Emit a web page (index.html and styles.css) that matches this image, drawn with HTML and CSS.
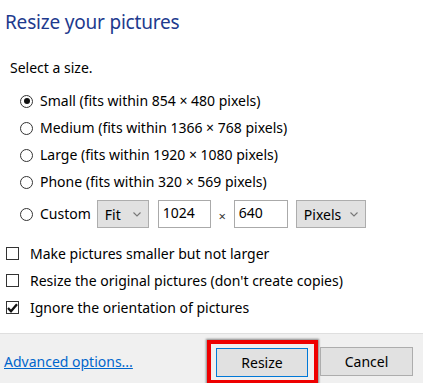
FILE: index.html
```html
<!DOCTYPE html>
<html>
<head>
<meta charset="utf-8">
<link rel="stylesheet" href="styles.css">
</head>
<body>
<div class="dialog">
  <div class="content">
    <h1 class="title">Resize your pictures</h1>
    <div class="prompt">Select a size.</div>
    <div class="radios">
      <div class="radio-row"><span class="radio checked"></span><span class="label">Small (fits within 854 × 480 pixels)</span></div>
      <div class="radio-row"><span class="radio"></span><span class="label">Medium (fits within 1366 × 768 pixels)</span></div>
      <div class="radio-row"><span class="radio"></span><span class="label">Large (fits within 1920 × 1080 pixels)</span></div>
      <div class="radio-row"><span class="radio"></span><span class="label">Phone (fits within 320 × 569 pixels)</span></div>
      <div class="radio-row custom"><span class="radio"></span><span class="label">Custom</span>
        <div class="select fit">Fit<span class="chev"><svg width="8" height="5" viewBox="0 0 8 5"><path d="M0.5 0.5 L4 4 L7.5 0.5" fill="none" stroke="#777" stroke-width="1.1"/></svg></span></div>
        <div class="input w1024">1024</div>
        <span class="times">×</span>
        <div class="input w640">640</div>
        <div class="select pixels">Pixels<span class="chev"><svg width="8" height="5" viewBox="0 0 8 5"><path d="M0.5 0.5 L4 4 L7.5 0.5" fill="none" stroke="#777" stroke-width="1.1"/></svg></span></div>
      </div>
    </div>
    <div class="checks">
      <div class="check-row"><span class="box"></span><span class="label">Make pictures smaller but not larger</span></div>
      <div class="check-row"><span class="box"></span><span class="label">Resize the original pictures (don't create copies)</span></div>
      <div class="check-row"><span class="box"><svg width="11" height="10" viewBox="0 0 11 10"><path d="M1 5 L4 8.2 L10 1.2" fill="none" stroke="#111" stroke-width="2.3"/></svg></span><span class="label">Ignore the orientation of pictures</span></div>
    </div>
  </div>
  <div class="footer">
    <a class="link" href="#">Advanced options...</a>
    <div class="buttons">
      <div class="highlight"><div class="btn primary">Resize</div></div>
      <div class="btn">Cancel</div>
    </div>
  </div>
</div>
</body>
</html>
```
FILE: styles.css
```css
html, body {
  margin: 0;
  padding: 0;
  background: #ffffff;
}
body {
  font-family: "Noto Sans", "Open Sans", sans-serif;
  color: #000;
  font-size: 14px;
  width: 423px;
  height: 383px;
  overflow: hidden;
}
.dialog {
  display: flex;
  flex-direction: column;
  height: 383px;
}
.content {
  flex: 1;
}
.title {
  margin: 0;
  padding: 9px 0 0 5px;
  font-weight: normal;
  font-size: 19px;
  line-height: 26px;
  color: #1d3a8e;
  letter-spacing: -0.2px;
}
.prompt {
  margin-top: 23px;
  padding-left: 10px;
  line-height: 20px;
}
.radios {
  margin-top: 13px;
  display: flex;
  flex-direction: column;
  gap: 7px;
}
.radio-row {
  display: flex;
  align-items: center;
  height: 20px;
  padding-left: 20px;
}
.radio {
  border: 1px solid #333;
  border-radius: 50%;
  box-sizing: border-box;
  width: 13px;
  height: 13px;
  margin-right: 7px;
  position: relative;
  flex: none;
}
.radio.checked::after {
  content: "";
  position: absolute;
  left: 2.5px;
  top: 2.5px;
  width: 6px;
  height: 6px;
  border-radius: 50%;
  background: #111;
}
.label {
  white-space: nowrap;
  line-height: 20px;
}
.radio-row.custom {
  height: 28px;
  margin-top: 1px;
}
.select {
  margin-left: 6px;
  height: 28px;
  box-sizing: border-box;
  border: 1px solid #adadad;
  background: #e1e1e1;
  display: flex;
  align-items: center;
  padding-left: 7px;
  position: relative;
}
.select .chev {
  position: absolute;
  right: 7px;
  top: 11px;
  line-height: 0;
}
.fit { width: 52px; }
.pixels { width: 70px; margin-left: 8px; }
.input {
  height: 28px;
  box-sizing: border-box;
  border: 1px solid #aaa;
  background: #fff;
  padding: 1px 0 0 4px;
  line-height: 22px;
}
.w1024 { width: 53px; margin-left: 9px; }
.w640 { width: 54px; }
.times {
  width: 23px;
  text-align: center;
  color: #333;
  font-size: 13px;
  padding-top: 3px;
}
.checks {
  margin-top: 15px;
  display: flex;
  flex-direction: column;
  gap: 6px;
}
.check-row {
  display: flex;
  align-items: center;
  height: 21px;
  padding-left: 6px;
}
.box {
  width: 13px;
  height: 13px;
  box-sizing: border-box;
  border: 1px solid #333;
  margin-right: 11px;
  display: flex;
  align-items: center;
  justify-content: center;
  flex: none;
}
.footer {
  height: 49px;
  background: #f0f0f0;
  border-top: 1px solid #dfdfdf;
  display: flex;
  align-items: center;
  justify-content: space-between;
  padding: 0 10px 0 4px;
}
.link {
  color: #0066cc;
  text-decoration: underline;
  font-size: 14px;
  padding-top: 6px;
}
.buttons {
  display: flex;
  align-items: center;
  padding-top: 6px;
}
.highlight {
  border: 4px solid #ee0000;
  padding: 4px 6px 3px 5px;
  box-shadow: 0 0 2px 1px rgba(0,0,0,0.45);
  margin-right: 2px;
}
.btn {
  width: 93px;
  height: 29px;
  box-sizing: border-box;
  border: 1px solid #adadad;
  background: #e1e1e1;
  display: flex;
  align-items: center;
  justify-content: center;
}
.btn.primary {
  border-color: #0078d7;
  width: 92px;
}
```
